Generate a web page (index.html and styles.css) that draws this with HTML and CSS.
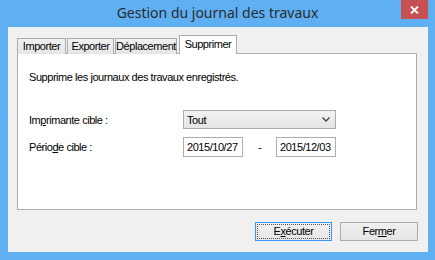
FILE: index.html
```html
<!DOCTYPE html>
<html lang="fr">
<head>
<meta charset="utf-8">
<title>Gestion du journal des travaux</title>
<link rel="stylesheet" href="styles.css">
</head>
<body>
<div class="window">
  <div class="titlebar">
    <span class="spacer"></span>
    <span class="title">Gestion du journal des travaux</span>
    <span class="close-wrap">
      <span class="close">
        <svg width="9" height="8" viewBox="0 0 9 8"><path d="M1 0.5 L8 7.5 M8 0.5 L1 7.5" stroke="#fff" stroke-width="1.8"/></svg>
      </span>
    </span>
  </div>
  <div class="client">
    <div class="tabs">
      <div class="tab t1">Importer</div>
      <div class="tab t2">Exporter</div>
      <div class="tab t3">Déplacement</div>
      <div class="tab active">Supprimer</div>
    </div>
    <div class="panel">
      <p class="desc">Supprime les journaux des travaux enregistrés.</p>
      <div class="form">
        <div class="label">Im<u>p</u>rimante cible :</div>
        <div class="select">
          <span>Tout</span>
          <svg width="8" height="5" viewBox="0 0 8 5"><path d="M0.5 0.5 L4 4 L7.5 0.5" fill="none" stroke="#444" stroke-width="1.4"/></svg>
        </div>
        <div class="label">Pério<u>d</u>e cible :</div>
        <div class="dates">
          <div class="date">2015/10/27</div>
          <span class="dash">-</span>
          <div class="date">2015/12/03</div>
        </div>
      </div>
    </div>
    <div class="buttons">
      <div class="btn default"><span class="focus">E<u>x</u>écuter</span></div>
      <div class="btn"><span class="inner">Fer<u>m</u>er</span></div>
    </div>
  </div>
</div>
</body>
</html>
```
FILE: styles.css
```css
html, body {
  margin: 0;
  padding: 0;
  background: #ffffff;
}
.window {
  width: 435px;
  height: 260px;
  box-sizing: border-box;
  background: #5eb0f3;
  display: flex;
  flex-direction: column;
  font-family: "Liberation Sans", Arial, sans-serif;
  font-size: 11px;
  letter-spacing: -0.45px;
  color: #000;
}
.titlebar {
  height: 27px;
  display: grid;
  grid-template-columns: 1fr auto 1fr;
  align-items: start;
}
.title {
  font-family: "Noto Sans", "Open Sans", sans-serif;
  font-size: 14px;
  letter-spacing: 0;
  color: #2b2b2b;
  line-height: 20px;
  padding-top: 3px;
  white-space: nowrap;
}
.close-wrap {
  display: flex;
  justify-content: flex-end;
  padding-right: 7px;
}
.close {
  width: 27px;
  height: 19px;
  background: #c75050;
  display: flex;
  align-items: center;
  justify-content: center;
}
.client {
  flex: 1;
  margin: 0 7px 8px 8px;
  background: #f0f0f0;
  padding: 9px 11px 0 9px;
  display: flex;
  flex-direction: column;
}
.tabs {
  display: flex;
  align-items: flex-end;
  height: 18px;
  position: relative;
  z-index: 1;
  margin-bottom: -1px;
}
.tab {
  box-sizing: border-box;
  height: 16px;
  border: 1px solid #acacac;
  border-bottom: none;
  background: linear-gradient(#f0f0f0, #e5e5e5);
  line-height: 15px;
  text-align: center;
  margin-right: 1px;
}
.t1 { width: 49px; }
.t2 { width: 47px; }
.t3 { width: 62px; }
.tab.active {
  width: 58px;
  height: 19px;
  background: #fff;
  margin-left: 1px;
  line-height: 16px;
}
.panel {
  height: 157px;
  box-sizing: border-box;
  background: #fff;
  border: 1px solid #acacac;
  padding: 0 0 0 10px;
}
.desc {
  margin: 17px 0 0 1px;
  line-height: 13px;
}
.form {
  margin-top: 26px;
  display: grid;
  grid-template-columns: 155px 153px;
  grid-template-rows: 19px 20px;
  row-gap: 8px;
  align-items: center;
}
.label {
  padding-left: 1px;
}
.select {
  box-sizing: border-box;
  height: 19px;
  border: 1px solid #acacac;
  background: linear-gradient(#f2f2f2, #e5e5e5);
  display: flex;
  align-items: center;
  justify-content: space-between;
  padding: 0 5px 0 3px;
}
.dates {
  display: flex;
  align-items: center;
}
.date {
  box-sizing: border-box;
  width: 60px;
  height: 20px;
  border: 1px solid #abadb3;
  background: #fff;
  padding-left: 3px;
  line-height: 18px;
}
.dash {
  width: 33px;
  text-align: center;
}
.buttons {
  display: flex;
  justify-content: flex-end;
  gap: 8px;
  margin-top: 12px;
  padding-right: 0;
}
.btn {
  box-sizing: border-box;
  height: 19px;
  border: 1px solid #acacac;
  background: linear-gradient(#f0f0f0, #e5e5e5);
  padding: 1px;
  display: flex;
}
.btn:first-child { width: 77px; }
.btn:last-child { width: 78px; margin-right: -1px; }
.btn.default {
  border-color: #3399ff;
}
.focus, .inner {
  flex: 1;
  text-align: center;
  line-height: 13px;
  border: 1px dotted transparent;
}
.focus {
  border-color: #555;
}
```
